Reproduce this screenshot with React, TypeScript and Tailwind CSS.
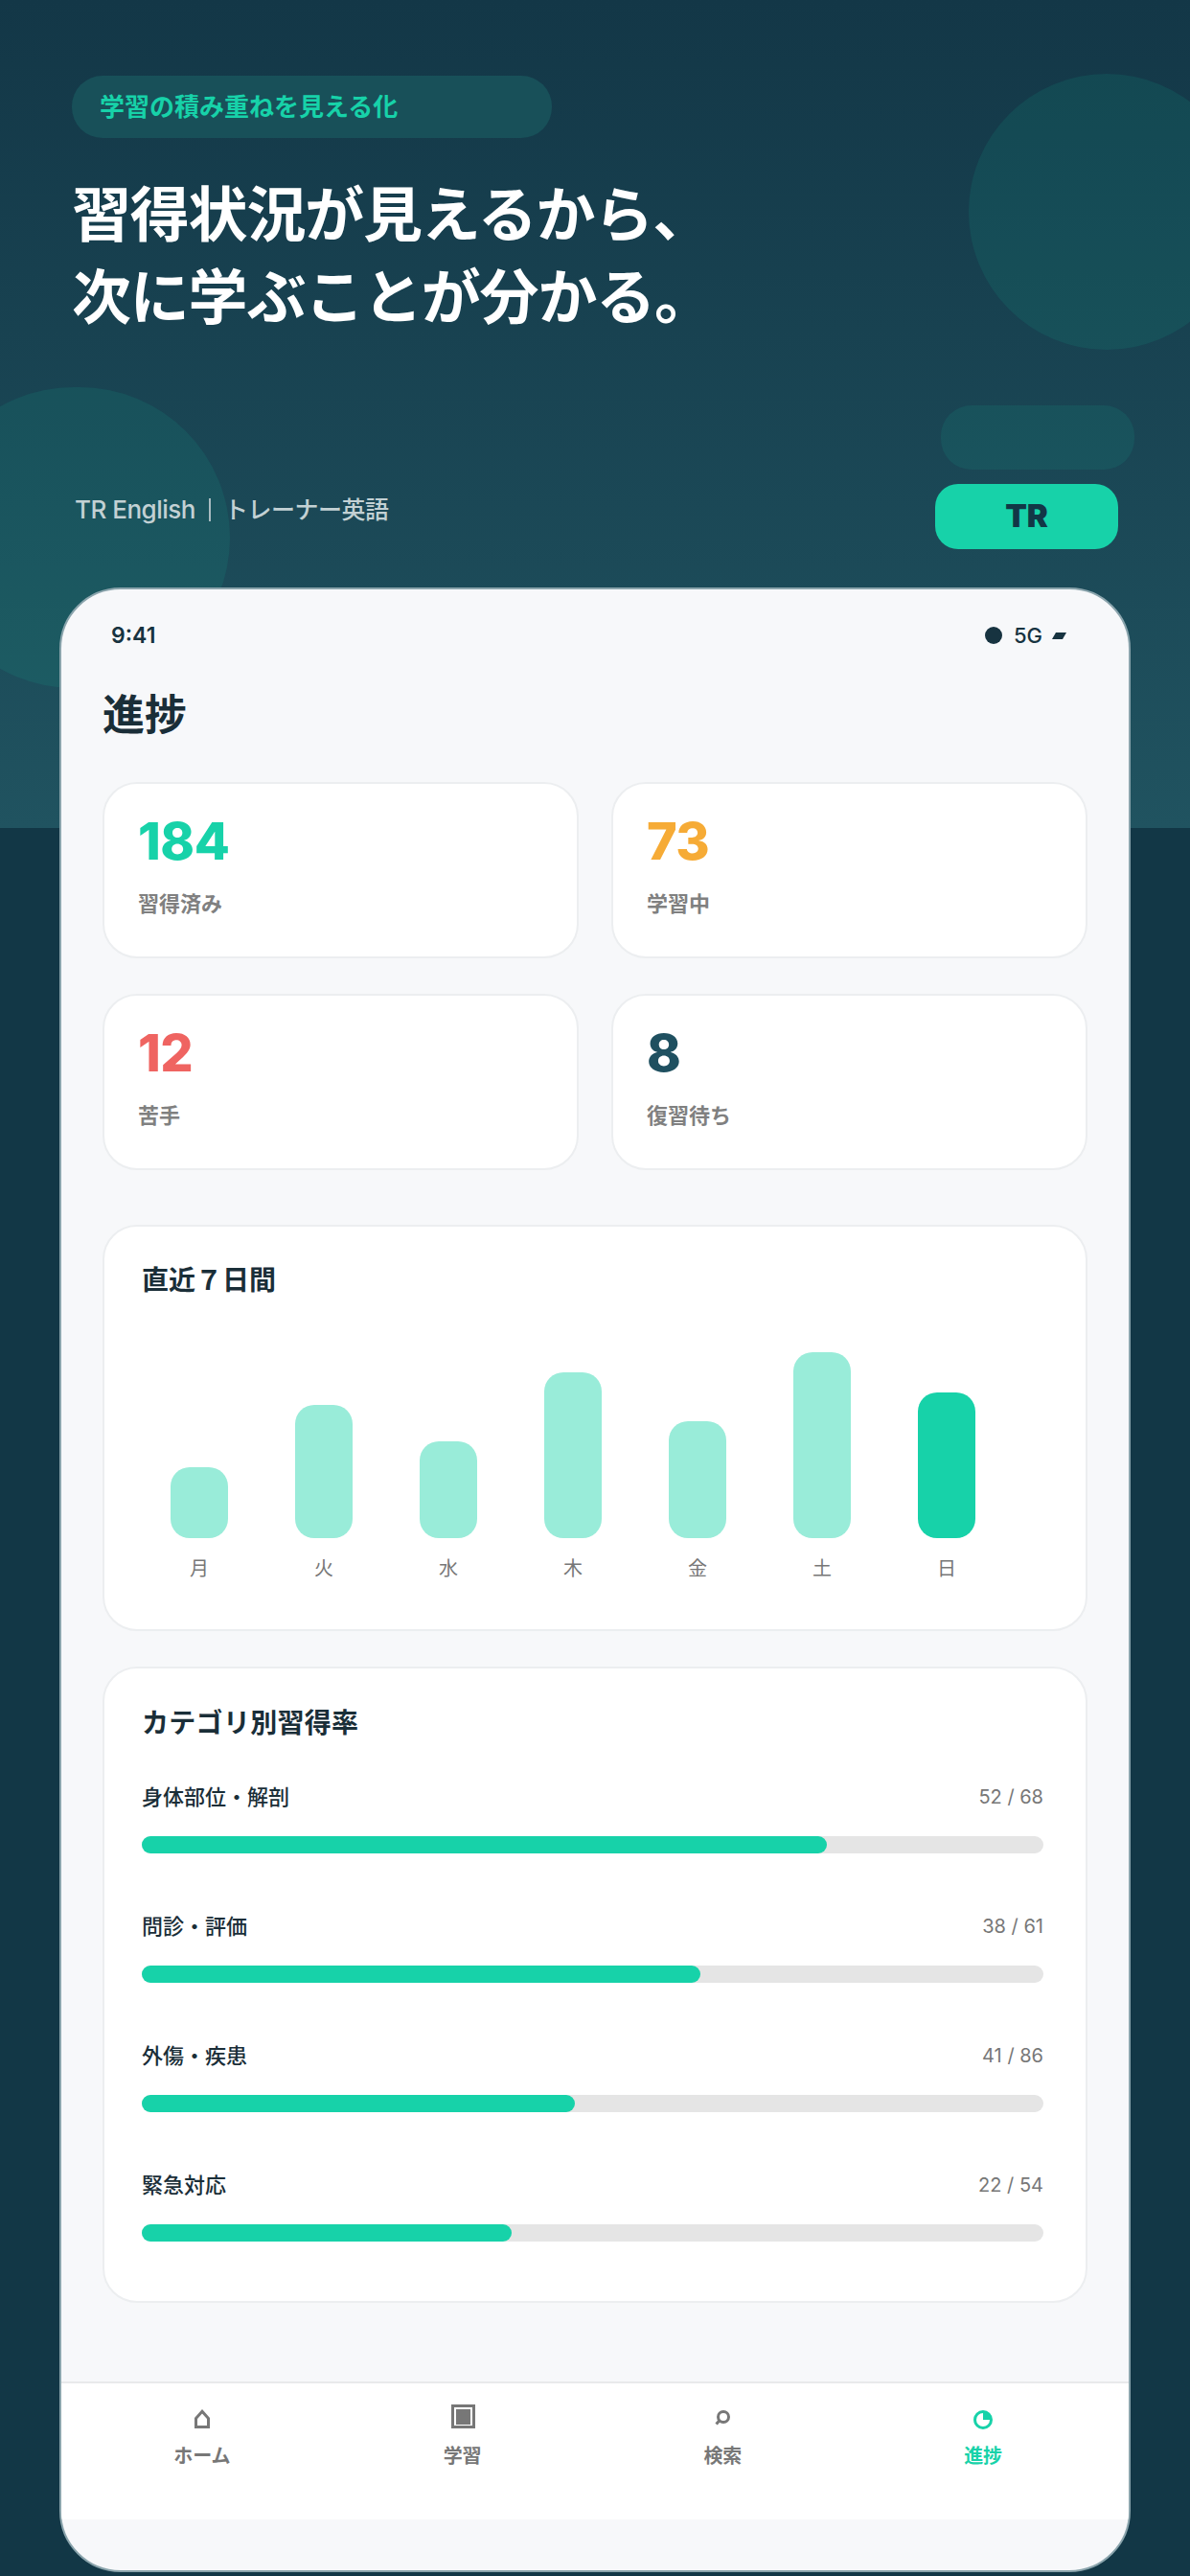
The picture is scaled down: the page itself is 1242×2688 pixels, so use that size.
import React from 'react';

const stats = [
  { value: '184', label: '習得済み', color: 'text-[#17d2a9]' },
  { value: '73', label: '学習中', color: 'text-[#f6ab36]' },
  { value: '12', label: '苦手', color: 'text-[#ef6461]' },
  { value: '8', label: '復習待ち', color: 'text-[#1f5060]' },
];

const days = [
  { label: '月', height: 74 },
  { label: '火', height: 139 },
  { label: '水', height: 101 },
  { label: '木', height: 173 },
  { label: '金', height: 122 },
  { label: '土', height: 194 },
  { label: '日', height: 152, today: true },
];

const categories = [
  { label: '身体部位・解剖', done: 52, total: 68 },
  { label: '問診・評価', done: 38, total: 61 },
  { label: '外傷・疾患', done: 41, total: 86 },
  { label: '緊急対応', done: 22, total: 54 },
];

const HomeIcon = () => (
  <svg width="32" height="32" viewBox="0 0 32 32" fill="none" stroke="currentColor" strokeWidth="3">
    <path d="M16 8.2 L22.5 15.6 V24.5 H9.5 V15.6 Z" />
  </svg>
);

const StudyIcon = () => (
  <svg width="32" height="32" viewBox="0 0 32 32" fill="none" stroke="currentColor" strokeWidth="3">
    <rect x="5.5" y="2.5" width="22" height="22" />
    <rect x="9" y="6" width="15" height="16" fill="currentColor" stroke="none" />
  </svg>
);

const SearchIcon = () => (
  <svg width="32" height="32" viewBox="0 0 32 32" fill="none" stroke="currentColor" strokeWidth="3">
    <circle cx="17" cy="14" r="5.5" />
    <path d="M12.6 18 L9.6 21.5" />
  </svg>
);

const ProgressIcon = () => (
  <svg width="32" height="32" viewBox="0 0 32 32" fill="none" stroke="currentColor" strokeWidth="3">
    <circle cx="16" cy="17" r="8.5" />
    <path d="M16 17 V8.5 A8.5 8.5 0 0 1 24.5 17 Z" fill="currentColor" stroke="none" />
  </svg>
);

const tabs = [
  { icon: <HomeIcon />, label: 'ホーム' },
  { icon: <StudyIcon />, label: '学習' },
  { icon: <SearchIcon />, label: '検索' },
  { icon: <ProgressIcon />, label: '進捗', active: true },
];

const App: React.FC = () => {
  return (
    <div className="relative w-[1242px] h-[2688px] overflow-hidden bg-[#123746] font-['Inter','Noto_Sans_CJK_JP',sans-serif]">
      {/* Hero backdrop */}
      <div className="absolute inset-x-0 top-0 h-[864px] overflow-hidden bg-gradient-to-b from-[#133747] to-[#205360]">
        <div className="absolute left-[1011px] top-[77px] w-[288px] h-[288px] rounded-full bg-[#17d2a9]/10" />
        <div className="absolute left-[-80px] top-[404px] w-[320px] h-[314px] rounded-full bg-[#17d2a9]/10" />
      </div>

      <div className="relative px-[62px]">
        {/* Hero copy */}
        <div className="h-[613px] pl-[13px] pt-[79px]">
          <div className="flex h-[65px] w-[501px] items-center rounded-[32px] bg-[#185059] pl-[29px] text-[26px] font-bold text-[#17d2a9]">
            学習の積み重ねを見える化
          </div>
          <h1 className="mt-[38px] text-[62px] leading-[86px] font-bold tracking-[-1.2px] text-white">
            習得状況が見えるから、
            <br />
            次に学ぶことが分かる。
          </h1>
          <div className="mt-[69px] flex items-end justify-between">
            <div className="mb-[21px] ml-[3px] flex items-center text-[26px] leading-[40px] font-medium tracking-[-0.5px] text-[#c3d1d4]">
              TR English
              <span className="mx-[14px] h-[24px] w-[2px] bg-[#a9bcc1]" />
              <span className="text-[25px]">トレーナー英語</span>
            </div>
            <div className="mr-[13px] flex flex-col items-end">
              <div className="mr-[-17px] h-[67px] w-[202px] rounded-[32px] bg-[#17d2a9]/10" />
              <div className="mt-[15px] flex h-[68px] w-[191px] items-center justify-center rounded-[24px] bg-[#17d2a9] text-[33px] font-black text-[#123746]">
                TR
              </div>
            </div>
          </div>
        </div>

        {/* Phone frame */}
        <div className="h-[2071px] w-[1118px] overflow-hidden rounded-[64px] border-2 border-[#8aa4ac] bg-[#f7f8fa]">
          <div className="flex h-[97px] items-end justify-between pb-[34px] pl-[52px] pr-[67px]">
            <span className="text-[23px] leading-[30px] font-semibold text-[#173340]">9:41</span>
            <div className="flex h-[30px] items-center text-[#173340]">
              <span className="h-[18px] w-[18px] rounded-full bg-[#173340]" />
              <span className="ml-[12px] text-[22px] leading-[30px] font-medium">5G</span>
              <span className="ml-[12px] h-[7px] w-[11px] -skew-x-[30deg] bg-[#173340]" />
            </div>
          </div>

          <div className="px-[43px]">
            <h2 className="mt-[4px] text-[44px] leading-[60px] font-bold text-[#1a2e38]">進捗</h2>

            <div className="mt-[40px] grid grid-cols-2 gap-x-[34px] gap-y-[37px]">
              {stats.map((s) => (
                <div key={s.label} className="h-[184px] rounded-[36px] border-2 border-[#eceef0] bg-white pl-[35px] pt-[26px]">
                  <div className={`text-[54px] leading-[68px] font-extrabold tracking-[-0.5px] ${s.color}`}>{s.value}</div>
                  <div className="mt-[15px] text-[22px] leading-[32px] font-semibold text-[#808080]">{s.label}</div>
                </div>
              ))}
            </div>

            {/* Last 7 days */}
            <div className="mt-[57px] h-[424px] rounded-[36px] border-2 border-[#eceef0] bg-white px-[39px] pt-[36px]">
              <h3 className="text-[28px] leading-[40px] font-bold text-[#1a2e38]">直近７日間</h3>
              <div className="ml-[-5px] mt-[29px] flex h-[220px] items-end">
                {days.map((d) => (
                  <div key={d.label} className="flex w-[130px] shrink-0 justify-center">
                    <div
                      className={`w-[60px] rounded-[20px] ${d.today ? 'bg-[#17d2a9]' : 'bg-[#99ecd9]'}`}
                      style={{ height: d.height }}
                    />
                  </div>
                ))}
              </div>
              <div className="ml-[-5px] mt-[18px] flex">
                {days.map((d) => (
                  <div key={d.label} className="w-[130px] shrink-0 text-center text-[20px] leading-[28px] text-[#777]">
                    {d.label}
                  </div>
                ))}
              </div>
            </div>

            {/* Category mastery */}
            <div className="mt-[37px] h-[664px] rounded-[36px] border-2 border-[#eceef0] bg-white pl-[39px] pr-[44px] pt-[37px]">
              <h3 className="text-[28px] leading-[40px] font-bold tracking-[0.3px] text-[#1a2e38]">カテゴリ別習得率</h3>
              <div className="mt-[41px] flex flex-col gap-[60px]">
                {categories.map((c) => (
                  <div key={c.label}>
                    <div className="flex h-[32px] items-center justify-between">
                      <span className="text-[22px] leading-[32px] font-medium text-[#1a2e38]">{c.label}</span>
                      <span className="text-[20px] leading-[30px] text-[#777]">{c.done} / {c.total}</span>
                    </div>
                    <div className="mt-[25px] h-[18px] rounded-full bg-[#e5e5e5]">
                      <div
                        className="h-full rounded-full bg-[#17d2a9]"
                        style={{ width: `${Math.round((c.done / c.total) * 100)}%` }}
                      />
                    </div>
                  </div>
                ))}
              </div>
            </div>
          </div>

          {/* Tab bar */}
          <div className="mt-[82px] grid h-[144px] grid-cols-4 border-t-2 border-[#e8e9eb] bg-white pl-[11px] pr-[16px] pt-[21px]">
            {tabs.map((t) => (
              <div key={t.label} className={`flex flex-col items-center ${t.active ? 'text-[#17d2a9]' : 'text-[#777]'}`}>
                {t.icon}
                <span className="mt-[9px] text-[20px] leading-[28px] font-bold">{t.label}</span>
              </div>
            ))}
          </div>
        </div>
      </div>
    </div>
  );
};

export default App;
